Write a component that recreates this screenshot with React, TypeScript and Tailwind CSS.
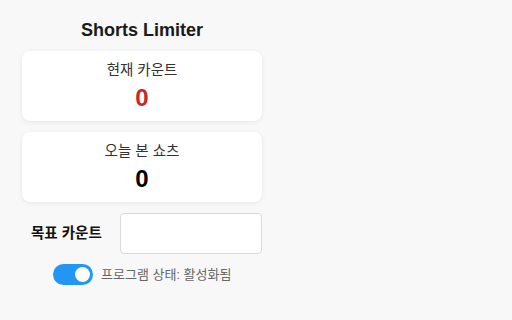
export default function App() {
  return (
    <div className="min-h-[320px] w-[512px] bg-[#f8f8f8] font-['Liberation_Sans','Noto_Sans_CJK_KR',sans-serif] text-[#222]">
      <div className="ml-[22px] w-[240px] pt-[18px]">
        <h1 className="text-center text-[18px] font-bold leading-[24px] text-[#1a1a1a]">Shorts Limiter</h1>

        <div className="mt-[9px] rounded-[8px] bg-white pb-[9px] pt-[9px] text-center shadow-[0_1px_4px_rgba(0,0,0,0.08)]">
          <div className="text-[14.5px] leading-[20px] text-[#333]">현재 카운트</div>
          <div className="mt-[4px] text-[24px] font-bold leading-[28px] text-[#c62828]">0</div>
        </div>

        <div className="mt-[11px] rounded-[8px] bg-white pb-[9px] pt-[9px] text-center shadow-[0_1px_4px_rgba(0,0,0,0.08)]">
          <div className="text-[14.5px] leading-[20px] text-[#333]">오늘 본 쇼츠</div>
          <div className="mt-[4px] text-[24px] font-bold leading-[28px] text-black">0</div>
        </div>

        <div className="mt-[11px] flex items-center">
          <label className="ml-[9px] text-[14.5px] font-bold text-[#111]">목표 카운트</label>
          <input
            type="number"
            className="ml-auto h-[41px] w-[142px] rounded-[4px] border border-[#d9d9d9] bg-white px-2 outline-none"
          />
        </div>

        <div className="mt-[10px] flex items-center pl-[31px]">
          <div className="relative h-[21px] w-[40px] rounded-full bg-[#2196f3]">
            <span className="absolute right-[3px] top-[3px] h-[15px] w-[15px] rounded-full bg-white" />
          </div>
          <span className="ml-[8px] text-[13px] text-[#666]">프로그램 상태: 활성화됨</span>
        </div>
      </div>
    </div>
  );
}
